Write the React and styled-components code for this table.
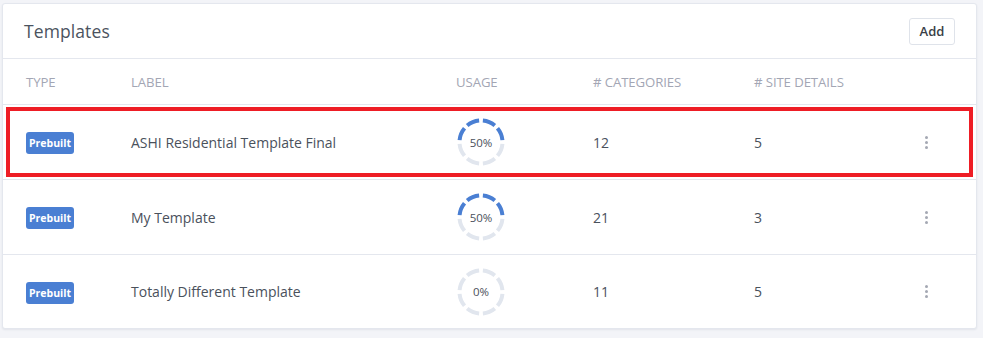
import React from "react";
import styled, { createGlobalStyle } from "styled-components";

const GlobalStyle = createGlobalStyle`
  html, body { margin: 0; padding: 0; background: #f3f4f8; }
  body { font-family: "Open Sans", "Noto Sans", Arial, sans-serif; color: #495057; }
  * { box-sizing: border-box; }
`;

const Page = styled.div`
  padding: 3px 6px 9px 2px;
`;

const Card = styled.section`
  background: #fff;
  border: 1px solid #e4e7ee;
  border-radius: 3px;
  box-shadow: 0 1px 2px rgba(40, 50, 80, 0.08);
`;

const CardHeader = styled.header`
  display: flex;
  align-items: center;
  justify-content: space-between;
  height: 55px;
  padding: 0 21px 0 21px;
  border-bottom: 1px solid #e4e7ee;
`;

const Title = styled.h2`
  margin: 0;
  font-size: 17.5px;
  font-weight: 400;
  color: #4b5360;
  letter-spacing: 0.1px;
`;

const AddButton = styled.button`
  height: 27px;
  width: 46px;
  padding: 0;
  border: 1px solid #dfe3ea;
  border-radius: 3px;
  background: #fff;
  font-family: inherit;
  font-size: 13px;
  font-weight: 600;
  color: #3a3f47;
  cursor: pointer;
`;

const Row = styled.div`
  position: relative;
  display: grid;
  grid-template-columns: 105px 325px 137px 161px 1fr 24px;
  align-items: center;
  height: ${(p) => p.$height}px;
  padding: 0 38px 0 23px;
  border-bottom: ${(p) => (p.$last ? "none" : "1px solid #e4e7ee")};

  ${(p) =>
    p.$highlight &&
    `
    &::after {
      content: "";
      position: absolute;
      top: 2px;
      bottom: 2px;
      left: 3px;
      right: 3px;
      border: 4px solid #ee1d25;
      pointer-events: none;
    }
  `}
`;

const HeadCell = styled.div`
  font-size: 13.2px;
  color: #a3a6b4;
  text-transform: uppercase;
  letter-spacing: -0.1px;
`;

const Cell = styled.div`
  font-size: 14px;
  color: #4a515c;
`;

const Badge = styled.span`
  display: inline-flex;
  align-items: center;
  justify-content: center;
  height: 22px;
  width: 48px;
  border-radius: 3px;
  background: #4a7fd3;
  color: #fff;
  font-size: 10.5px;
  font-weight: 700;
`;

const DonutWrap = styled.div`
  position: relative;
  width: 48px;
  height: 48px;
  margin-left: 1px;
`;

const DonutLabel = styled.span`
  position: absolute;
  inset: 0;
  display: flex;
  align-items: center;
  justify-content: center;
  font-size: 11.5px;
  color: #4a505a;
`;

const Kebab = styled.button`
  display: flex;
  flex-direction: column;
  align-items: center;
  gap: 2px;
  width: 24px;
  padding: 0;
  border: 0;
  background: none;
  cursor: pointer;
  span {
    width: 3px;
    height: 3px;
    border-radius: 50%;
    background: #a4a8b3;
  }
`;

function arcPath(cx, cy, r, a0, a1) {
  const toXY = (a) => {
    const rad = ((a - 90) * Math.PI) / 180;
    return [cx + r * Math.cos(rad), cy + r * Math.sin(rad)];
  };
  const [x0, y0] = toXY(a0);
  const [x1, y1] = toXY(a1);
  return `M ${x0.toFixed(2)} ${y0.toFixed(2)} A ${r} ${r} 0 0 1 ${x1.toFixed(2)} ${y1.toFixed(2)}`;
}

function Donut({ value }) {
  const segs = 8;
  const step = 360 / segs;
  const gap = 10;
  const start = 270;
  const filled = Math.round((value / 100) * segs);
  return (
    <DonutWrap>
      <svg width="48" height="48" viewBox="0 0 48 48">
        {Array.from({ length: segs }).map((_, i) => {
          const a0 = start + i * step + gap / 2;
          const a1 = start + (i + 1) * step - gap / 2;
          return (
            <path
              key={i}
              d={arcPath(24, 24, 21.5, a0, a1)}
              fill="none"
              stroke={i < filled ? "#4a7fd3" : "#e1e6ee"}
              strokeWidth="4"
            />
          );
        })}
      </svg>
      <DonutLabel>{value}%</DonutLabel>
    </DonutWrap>
  );
}

const rows = [
  { label: "ASHI Residential Template Final", usage: 50, cats: 12, details: 5, highlight: true },
  { label: "My Template", usage: 50, cats: 21, details: 3 },
  { label: "Totally Different Template", usage: 0, cats: 11, details: 5 },
];

export default function App() {
  return (
    <>
      <GlobalStyle />
      <Page>
        <Card>
          <CardHeader>
            <Title>Templates</Title>
            <AddButton>Add</AddButton>
          </CardHeader>
          <Row $height={46}>
            <HeadCell>Type</HeadCell>
            <HeadCell>Label</HeadCell>
            <HeadCell>Usage</HeadCell>
            <HeadCell># Categories</HeadCell>
            <HeadCell># Site Details</HeadCell>
            <div />
          </Row>
          {rows.map((r, i) => (
            <Row
              key={r.label}
              $height={i === rows.length - 1 ? 73 : 75}
              $last={i === rows.length - 1}
              $highlight={r.highlight}
            >
              <div>
                <Badge>Prebuilt</Badge>
              </div>
              <Cell>{r.label}</Cell>
              <Donut value={r.usage} />
              <Cell>{r.cats}</Cell>
              <Cell>{r.details}</Cell>
              <Kebab aria-label="More">
                <span />
                <span />
                <span />
              </Kebab>
            </Row>
          ))}
        </Card>
      </Page>
    </>
  );
}
